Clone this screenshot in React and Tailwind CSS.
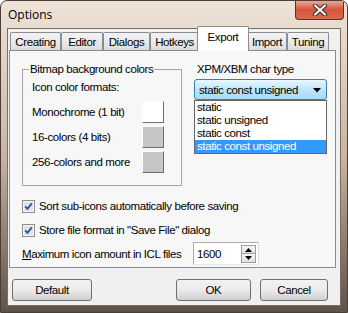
import React from "react";

const ui = "font-['Liberation_Sans',Arial,sans-serif] text-[11.5px] tracking-[-0.4px] leading-[14px] text-black whitespace-nowrap";

const tabs = [
  { label: "Creating", w: "w-[51px]" },
  { label: "Editor", w: "w-[42px]" },
  { label: "Dialogs", w: "w-[47px]" },
  { label: "Hotkeys", w: "w-[49px]" },
  { label: "Export", w: "w-[46px]", active: true },
  { label: "Import", w: "w-[40px]" },
  { label: "Tuning", w: "w-[42px]" },
];

function CheckBox() {
  return (
    <svg width="13" height="13" viewBox="0 0 13 13" className="shrink-0">
      <rect x="0.5" y="0.5" width="12" height="12" fill="#f6f6f6" stroke="#8e8f8f" />
      <rect x="2" y="2" width="9" height="9" fill="#e1e3e8" />
      <path d="M3.2 6.4 L5.4 8.8 L9.8 3.4" stroke="#2f4f9a" strokeWidth="1.8" fill="none" />
    </svg>
  );
}

function Swatch({ face }) {
  return (
    <div className={`w-[22px] h-[22px] border border-t-[#fdfdfd] border-l-[#fdfdfd] border-b-[#6e6e6e] border-r-[#6e6e6e] ${face}`} />
  );
}

export default function App() {
  return (
    <div className="w-[348px] h-[313px] relative overflow-hidden rounded-t-[7px] border border-[#4a3e36] bg-gradient-to-b from-[#efe3d8] via-[#c8b5a4] to-[#5f524a] flex flex-col">
      {/* title bar */}
      <div className="h-[27px] flex items-center pl-[7px] font-['Open_Sans','Noto_Sans',sans-serif] text-[12px] text-black">
        Options
      </div>
      <div className="absolute top-[-1px] right-[3px] w-[49px] h-[20px] rounded-b-[4px] border border-[#6b2a1c] border-t-0 bg-gradient-to-b from-[#eab1a2] via-[#d4553a] to-[#d9694c] flex items-center justify-center">
        <svg width="16" height="12" viewBox="0 0 16 12">
          <path d="M3 1.5 L13 10.5 M13 1.5 L3 10.5" stroke="#3b2a2a" strokeWidth="4.2" strokeLinecap="round" />
          <path d="M3 1.5 L13 10.5 M13 1.5 L3 10.5" stroke="#ffffff" strokeWidth="2.2" strokeLinecap="round" />
        </svg>
      </div>

      {/* client area */}
      <div className={`ml-[6px] w-[334px] h-[278px] border border-[#7c6d62] bg-[#f0f0f0] flex flex-col ${ui}`}>
        <div className="flex items-end h-[21px] mt-[1px] pl-[2px] -mb-[1px] relative z-10">
          {tabs.map((t) =>
            t.active ? (
              <div
                key={t.label}
                className={`${t.w} h-[21px] -mx-[2px] px-[2px] box-content border border-b-0 border-[#898c95] rounded-t-[2px] bg-white flex items-start justify-center pt-[3px] relative z-10`}
              >
                {t.label}
              </div>
            ) : (
              <div
                key={t.label}
                className={`${t.w} h-[18px] mb-[1px] border border-b-0 border-[#898c95] rounded-t-[2px] bg-gradient-to-b from-[#f3f3f3] via-[#ebebeb] to-[#dcdcdc] flex items-center justify-center`}
              >
                {t.label}
              </div>
            )
          )}
        </div>

        {/* tab page */}
        <div className="ml-[1px] w-[327px] h-[218px] border border-[#898c95] bg-[#f7f7f7] pl-[12px] pt-[11px] flex flex-col">
          <div className="flex">
            <fieldset className="w-[160px] h-[124px] border border-[#a4a4a4] pt-[4px]">
              <legend className="ml-[6px] px-[1px]">Bitmap background colors</legend>
              <div className="pl-[9px]">
                <div>Icon color formats:</div>
                <div className="grid grid-cols-[110px_22px] gap-y-[3px] mt-[7px] items-center">
                  <span>Monochrome (1 bit)</span>
                  <Swatch face="bg-white" />
                  <span>16-colors (4 bits)</span>
                  <Swatch face="bg-[#c6c6c6]" />
                  <span>256-colors and more</span>
                  <Swatch face="bg-[#c6c6c6]" />
                </div>
              </div>
            </fieldset>

            <div className="ml-[12px] flex flex-col">
              <div className="pl-[3px]">XPM/XBM char type</div>
              <div className="relative mt-[3px] w-[133px] h-[21px] rounded-[3px] border border-[#3c7fb1] bg-gradient-to-b from-[#eaf6fd] via-[#bee6fd] to-[#a7d9f5] flex items-center pl-[4px]">
                <span>static const unsigned</span>
                <svg width="8" height="5" viewBox="0 0 8 5" className="absolute right-[5px] top-[8px]">
                  <path d="M0 0 H8 L4 4.5 Z" fill="#000" />
                </svg>
                {/* dropdown list */}
                <div className="absolute left-[-1px] top-[20px] w-[133px] border border-[#646464] bg-white flex flex-col">
                  <div className="h-[13px] leading-[13px] pl-[2px]">static</div>
                  <div className="h-[13px] leading-[13px] pl-[2px]">static unsigned</div>
                  <div className="h-[13px] leading-[13px] pl-[2px]">static const</div>
                  <div className="h-[13px] leading-[13px] pl-[2px] bg-[#3399ff] text-white">static const unsigned</div>
                </div>
              </div>
            </div>
          </div>

          <div className="flex items-center gap-[4px] h-[14px] mt-[13px]">
            <CheckBox />
            <span>Sort sub-icons automatically before saving</span>
          </div>
          <div className="flex items-center gap-[4px] h-[14px] mt-[10px]">
            <CheckBox />
            <span>Store file format in "Save File" dialog</span>
          </div>
          <div className="flex items-center mt-[5px] h-[23px]">
            <span className="w-[171px]">
              <span className="underline">M</span>aximum icon amount in ICL files
            </span>
            <div className="w-[66px] h-[23px] border border-[#abadb3] border-b-[#e3e9ef] border-r-[#dbdfe6] bg-white flex items-center pl-[3px] relative">
              <span>1600</span>
              <div className="absolute right-[2px] top-[2px] w-[15px] flex flex-col">
                <div className="h-[9px] border border-[#a0a0a0] bg-gradient-to-b from-[#f8f8f8] to-[#dedede] flex items-center justify-center">
                  <svg width="7" height="4" viewBox="0 0 7 4"><path d="M0 4 H7 L3.5 0 Z" fill="#000" /></svg>
                </div>
                <div className="h-[9px] border border-t-0 border-[#a0a0a0] bg-gradient-to-b from-[#f8f8f8] to-[#dedede] flex items-center justify-center">
                  <svg width="7" height="4" viewBox="0 0 7 4"><path d="M0 0 H7 L3.5 4 Z" fill="#000" /></svg>
                </div>
              </div>
            </div>
          </div>
        </div>

        {/* buttons */}
        <div className="flex mt-[11px] pl-[4px]">
          <button className="w-[80px] h-[22px] rounded-[3px] border border-[#707070] bg-gradient-to-b from-[#f2f2f2] via-[#ebebeb] to-[#cfcfcf]">
            Default
          </button>
          <button className="ml-[84px] w-[75px] h-[22px] rounded-[3px] border border-[#707070] bg-gradient-to-b from-[#f2f2f2] via-[#ebebeb] to-[#cfcfcf]">
            OK
          </button>
          <button className="ml-[9px] w-[68px] h-[22px] rounded-[3px] border border-[#707070] bg-gradient-to-b from-[#f2f2f2] via-[#ebebeb] to-[#cfcfcf]">
            Cancel
          </button>
        </div>
      </div>
    </div>
  );
}
